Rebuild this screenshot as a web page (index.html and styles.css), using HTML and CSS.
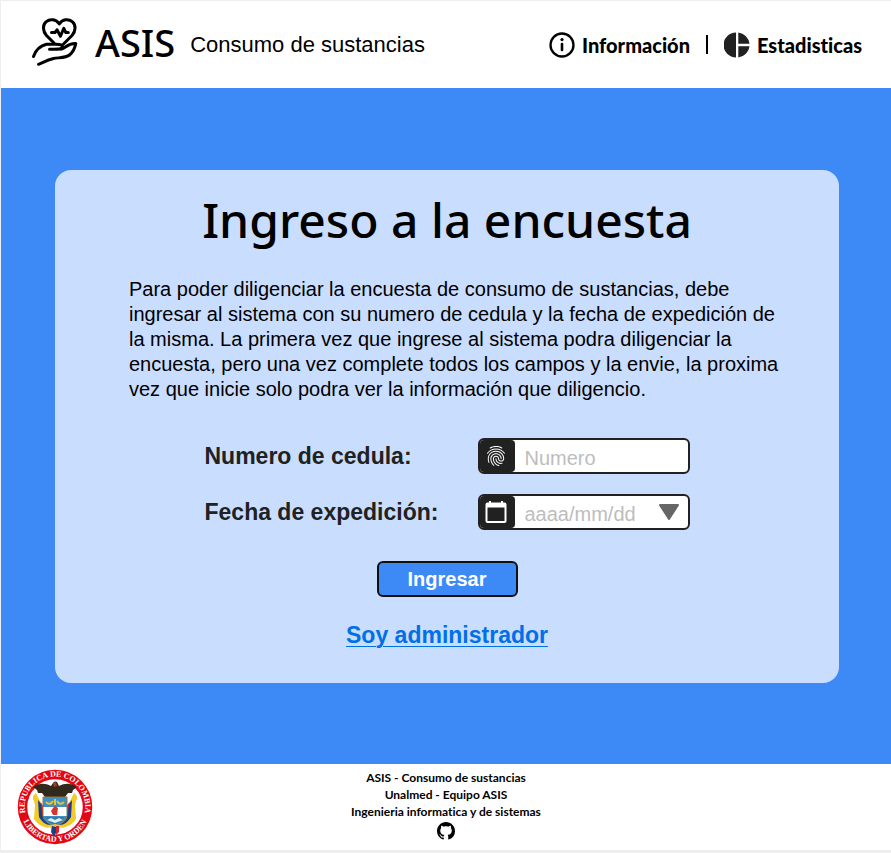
FILE: index.html
```html
<!DOCTYPE html>
<html lang="es">
<head>
<meta charset="utf-8">
<meta name="viewport" content="width=device-width, initial-scale=1">
<title>ASIS - Consumo de sustancias</title>
<link rel="stylesheet" href="styles.css">
</head>
<body>
<header class="topbar">
  <a class="brand" href="#">
    <svg class="brand-logo" viewBox="1 0 48 52" aria-hidden="true">
      <g fill="none" stroke="#000" stroke-width="3" stroke-linecap="round" stroke-linejoin="round">
        <path d="M24 27 16.500 19.500C12.500 15 12.500 9 16 5.800C20 2.500 26 3 29.300 8C32.500 3 38.500 2.500 42.500 5.800C46 9 46 15 42 19.500L33.500 28"/>
        <path d="M21.500 16.500h3.500l2-2.700 3.500 6.500 3.300-8 2 4.200h2.500"/>
        <path d="M3.500 40.500C5.500 35 9 30 16.500 28.300H25C30 28.500 33.500 28.500 32 31.500C31 33.500 29 33.200 19.500 33.200M31 33.200C36 32.500 37 27 45.800 27.500C45 32 43 36 39.500 39C36 42 29 41.500 23.500 42.500C17 44 13 46.500 8.500 48.300"/>
      </g>
    </svg>
    <span class="brand-name">ASIS</span>
    <span class="brand-tag">Consumo de sustancias</span>
  </a>
  <nav class="nav">
    <a class="nav-link" href="#">
      <svg class="nav-icon" viewBox="0 0 26 26" aria-hidden="true">
        <circle cx="13" cy="13" r="11.500" fill="none" stroke="#000" stroke-width="2.300"/>
        <path d="M13 12v6" stroke="#000" stroke-width="2.600" stroke-linecap="round"/>
        <circle cx="13" cy="7.600" r="1.600"/>
      </svg>
      Información
    </a>
    <span class="nav-sep"></span>
    <a class="nav-link" href="#">
      <svg class="nav-icon" viewBox="0 0 26 26" aria-hidden="true">
        <path fill="#212121" d="M12 .5V25.500A12.500 12.500 0 0 1 12 .5ZM14.300 .5A12.600 12.600 0 0 1 25.500 11.800H14.300ZM14.300 14.200H25.500A12.600 12.600 0 0 1 14.300 25.500Z"/>
      </svg>
      Estadisticas
    </a>
  </nav>
</header>

<main class="main">
  <form class="card">
    <h1 class="title">Ingreso a la encuesta</h1>
    <p class="intro">Para poder diligenciar la encuesta de consumo de sustancias, debe ingresar al sistema con su numero de cedula y la fecha de expedición de la misma. La primera vez que ingrese al sistema podra diligenciar la encuesta, pero una vez complete todos los campos y la envie, la proxima vez que inicie solo podra ver la información que diligencio.</p>
    <div class="fields">
      <label class="label" for="cedula">Numero de cedula:</label>
      <div class="field">
        <span class="field-icon">
          <svg class="field-glyph" viewBox="0 0 24 24" aria-hidden="true"><path fill="#fff" d="M17.810 4.470c-.08 0-.16-.02-.23-.06C15.660 3.420 14 3 12.010 3c-1.980 0-3.860.470-5.570 1.410-.24.130-.54.040-.68-.2-.13-.24-.04-.55.2-.68C7.820 2.520 9.860 2 12.010 2c2.130 0 3.990.470 6.030 1.520.25.130.34.430.21.670-.09.180-.26.280-.44.280zM3.500 9.720c-.1 0-.2-.03-.29-.09-.23-.16-.28-.47-.12-.7.990-1.400 2.250-2.500 3.750-3.270C9.980 4.040 14 4.030 17.150 5.650c1.500.770 2.760 1.860 3.750 3.250.16.220.11.540-.12.700-.23.160-.54.110-.7-.12-.9-1.260-2.040-2.250-3.390-2.940-2.870-1.470-6.540-1.470-9.400.010-1.360.700-2.500 1.700-3.400 2.960-.08.140-.23.210-.39.210zm6.250 12.070c-.13 0-.26-.05-.35-.15-.87-.87-1.340-1.430-2.010-2.640-.69-1.230-1.050-2.730-1.050-4.340 0-2.970 2.540-5.390 5.660-5.390s5.660 2.420 5.660 5.390c0 .28-.22.500-.5.500s-.5-.22-.5-.5c0-2.420-2.090-4.390-4.660-4.390-2.570 0-4.660 1.970-4.660 4.390 0 1.440.320 2.770.930 3.850.640 1.150 1.080 1.640 1.850 2.420.190.200.190.510 0 .710-.11.100-.24.150-.37.150zm7.170-1.850c-1.190 0-2.240-.3-3.100-.89-1.490-1.010-2.380-2.650-2.380-4.390 0-.28.220-.5.500-.5s.5.220.5.500c0 1.410.720 2.740 1.940 3.560.710.480 1.540.710 2.540.710.240 0 .640-.03 1.040-.1.270-.05.530.130.580.410.050.270-.13.530-.41.580-.57.110-1.070.120-1.210.120zM14.910 22c-.04 0-.09-.01-.13-.02-1.590-.44-2.630-1.030-3.720-2.100-1.400-1.390-2.170-3.240-2.170-5.220 0-1.620 1.380-2.940 3.080-2.940 1.700 0 3.080 1.320 3.080 2.940 0 1.070.930 1.940 2.080 1.940s2.080-.87 2.080-1.940c0-3.770-3.250-6.830-7.250-6.830-2.840 0-5.440 1.580-6.610 4.030-.39.810-.59 1.760-.59 2.800 0 .78.070 2.010.670 3.610.1.260-.03.550-.29.640-.26.100-.55-.04-.64-.29-.49-1.310-.73-2.610-.73-3.960 0-1.200.230-2.290.680-3.240 1.330-2.790 4.280-4.600 7.510-4.600 4.550 0 8.250 3.510 8.250 7.830 0 1.620-1.380 2.940-3.080 2.940s-3.080-1.320-3.080-2.940c0-1.070-.93-1.940-2.080-1.940s-2.080.870-2.080 1.940c0 1.710.660 3.310 1.870 4.510.950.940 1.860 1.460 3.270 1.850.270.070.420.350.350.610-.05.230-.26.380-.47.380z"/></svg>
        </span>
        <input class="input" id="cedula" type="text" inputmode="numeric" placeholder="Numero">
      </div>
      <label class="label" for="fecha">Fecha de expedición:</label>
      <div class="field">
        <span class="field-icon">
          <svg class="field-glyph" viewBox="0 0 24 24" aria-hidden="true"><path fill="#fff" fill-rule="evenodd" d="M3.500 2.500H5V1h2v1.500h10V1h2v1.500h1.500a2 2 0 0 1 2 2v16.500a2 2 0 0 1-2 2h-17a2 2 0 0 1-2-2V4.500a2 2 0 0 1 2-2zM3.500 7.500v13.500h17V7.500z"/></svg>
        </span>
        <input class="input" id="fecha" type="text" placeholder="aaaa/mm/dd">
        <button class="picker" type="button" aria-label="Abrir calendario">
          <svg class="picker-glyph" viewBox="0 0 20 16" aria-hidden="true"><path d="M1 1h18L10 15z" fill="#666" stroke="#666" stroke-width="2" stroke-linejoin="round"/></svg>
        </button>
      </div>
    </div>
    <button class="submit" type="submit">Ingresar</button>
    <a class="admin" href="#">Soy administrador</a>
  </form>
</main>

<footer class="footer">
  <svg class="seal" viewBox="0 0 76 76" role="img" aria-label="Escudo de Colombia">
    <circle cx="38" cy="38" r="32.500" fill="#fff" stroke="#e30613" stroke-width="9.500"/>
    <path id="arc-top" d="M11.500 52.500A30.300 30.300 0 1 1 64.500 52.500" fill="none"/>
    <path id="arc-bottom" d="M6 51.500A34.800 34.800 0 0 0 70 51.500" fill="none"/>
    <text class="seal-text"><textPath href="#arc-top" startOffset="50%" text-anchor="middle">REPUBLICA DE COLOMBIA</textPath></text>
    <text class="seal-text"><textPath href="#arc-bottom" startOffset="50%" text-anchor="middle">LIBERTAD Y ORDEN</textPath></text>
    <path d="M19 24c-3 2-4 5-2 8l1 4-1 14c4 6 9 8 14 9l4-3-11-22zM57 24c3 2 4 5 2 8l-1 4 1 14c-4 6-9 8-14 9l-4-3 11-22z" fill="#f4c92a"/>
    <path d="M21 31l1 17c3 5 7 8 11 8l2-2-10-18zM55 31l-1 17c-3 5-7 8-11 8l-2-2 10-18z" fill="#173f8a"/>
    <path d="M23.500 33l2 14 7 7 2-2-9-16zM52.500 33l-2 14-7 7-2-2 9-16z" fill="#d8202a"/>
    <path d="M16 18c6-4 12-4 18-1l2-3c2-2 4-2 5 1l1 2c6-3 12-3 18 1l-4 3-1 3-4 0-3 4-6 1H34l-6-1-3-4-4 0-1-3z" fill="#30291c"/>
    <path d="M36 14l3-1 1 4-3 1z" fill="#a33b22"/>
    <path d="M26 28h24v18c0 6-5 8-12 12-7-4-12-6-12-12z" fill="#3f8fc6" stroke="#9a772b"/>
    <path d="M29 33c3 3 5 2 7-1M47 33c-3 3-5 2-7-1M38 30v6" fill="none" stroke="#e8c72c" stroke-width="2"/>
    <path d="M26.500 38h23v9h-23z" fill="#fff"/>
    <path d="M36 39l2-2 3 2-1 7h-4l-2-4z" fill="#d8342d"/>
    <path d="M28 48h20l-4 5-6 3-6-3z" fill="#347ba5"/>
    <path d="M30 51l4-2 4 2 4-2 4 2-8 3z" fill="#d9eef5"/>
    <path d="M31 57l7-2 7 2-4 3-3 5-3-5z" fill="#f4c92a"/>
    <path d="M35 57l4 1 0 6-2 4-3-5z" fill="#173f8a"/>
    <path d="M39 57h3v6l-3 3z" fill="#d8202a"/>
  </svg>
  <div class="credits">
    <span>ASIS - Consumo de sustancias</span>
    <span>Unalmed - Equipo ASIS</span>
    <span>Ingenieria informatica y de sistemas</span>
    <a class="github" href="#" aria-label="GitHub">
      <svg class="github-icon" viewBox="0 0 16 16" aria-hidden="true"><path d="M8 0C3.580 0 0 3.580 0 8c0 3.540 2.290 6.530 5.470 7.590.4.070.550-.17.550-.38 0-.19-.01-.82-.01-1.490-2.010.370-2.530-.49-2.690-.94-.09-.23-.48-.94-.82-1.130-.28-.15-.68-.52-.01-.53.630-.01 1.080.580 1.230.820.720 1.210 1.870.870 2.330.660.070-.52.280-.87.510-1.070-1.780-.2-3.640-.89-3.640-3.950 0-.87.310-1.590.820-2.150-.08-.2-.36-1.020.080-2.120 0 0 .670-.21 2.200.820.640-.18 1.320-.27 2-.27s1.360.090 2 .270c1.530-1.040 2.200-.82 2.200-.82.440 1.100.160 1.920.080 2.120.510.560.820 1.270.820 2.150 0 3.070-1.870 3.750-3.650 3.950.290.250.540.730.540 1.480 0 1.070-.01 1.930-.01 2.200 0 .21.150.460.550.380A8.010 8.010 0 0 0 16 8c0-4.420-3.580-8-8-8z"/></svg>
    </a>
  </div>
</footer>
</body>
</html>
```
FILE: styles.css
```css
* {
  box-sizing: border-box;
}

body {
  margin: 0;
  min-height: 100vh;
  display: flex;
  flex-direction: column;
  border: solid #eee;
  border-width: 1px 0 3px 1px;
  background: #fff;
  color: #000;
  font-family: "Liberation Sans", Arial, sans-serif;
  font-variant-ligatures: none;
}

a {
  color: inherit;
  text-decoration: none;
}

svg {
  display: block;
  flex: none;
}

.topbar {
  display: flex;
  align-items: center;
  justify-content: space-between;
  height: 87px;
  padding: 0 29px 0 30px;
}

.brand {
  display: flex;
  align-items: center;
}

.brand-logo {
  width: 48px;
  height: 52px;
  margin: 0 16px 6px 0;
}

.brand-name {
  margin: 0 15px 6px 0;
  font-family: "Noto Sans", sans-serif;
  font-size: 38px;
  font-weight: 500;
  line-height: 44px;
}

.brand-tag {
  font-size: 22px;
  line-height: 28px;
}

.nav {
  display: flex;
  align-items: center;
  gap: 16px;
}

.nav-link {
  display: flex;
  align-items: center;
  gap: 7px;
  font-family: Lato, sans-serif;
  font-size: 20px;
  font-weight: 900;
  line-height: 26px;
}

.nav-icon {
  width: 26px;
  height: 26px;
}

.nav-sep {
  width: 2px;
  height: 19px;
  background: #000;
}

.main {
  flex: 1;
  display: flex;
  align-items: center;
  padding: 80px 52px 80px 54px;
  background: #3d8af7;
}

.card {
  flex: 1;
  display: flex;
  flex-direction: column;
  align-items: center;
  padding: 18px 50px 34px;
  border-radius: 16px;
  background: #c9ddff;
}

.title {
  margin: 0;
  font-family: "Noto Sans", sans-serif;
  font-size: 48px;
  font-weight: 500;
  line-height: 64px;
}

.intro {
  max-width: 656px;
  margin: 25px 0 36px 20px;
  font-size: 20px;
  line-height: 25px;
}

.fields {
  display: grid;
  grid-template-columns: 273px 212px;
  align-items: center;
  row-gap: 20px;
}

.label {
  color: #212121;
  font-size: 23px;
  font-weight: 700;
  line-height: 28px;
}

.field {
  display: flex;
  height: 36px;
  overflow: hidden;
  border: 2px solid #212121;
  border-radius: 6px;
  background: #fff;
}

.field-icon {
  display: flex;
  flex: none;
  align-items: center;
  justify-content: center;
  width: 35px;
  padding-right: 2px;
  border-radius: 0 4px 4px 0;
  background: #212121;
}

.field-glyph {
  width: 24px;
  height: 24px;
}

.input {
  flex: 1;
  min-width: 0;
  padding: 4px 0 0 10px;
  border: 0;
  outline: 0;
  background: transparent;
  font: 20px/24px "Liberation Sans", Arial, sans-serif;
}

.input::placeholder {
  color: #bdbdbd;
  opacity: 1;
}

.picker {
  padding: 0 9px;
  border: 0;
  background: transparent;
}

.picker-glyph {
  width: 20px;
  height: 16px;
}

.submit {
  width: 141px;
  height: 36px;
  margin: 31px 0 24px;
  padding: 0;
  border: 2px solid #111;
  border-radius: 6px;
  background: #3d8af7;
  color: #fff;
  font: 700 20px/24px "Liberation Sans", Arial, sans-serif;
}

.admin {
  color: #0070e8;
  font-size: 23px;
  font-weight: 700;
  line-height: 28px;
  text-decoration: underline;
  text-decoration-thickness: 1px;
  text-underline-offset: 3px;
}

.footer {
  display: grid;
  grid-template-columns: 1fr auto 1fr;
  align-items: start;
  padding: 5px 16px;
}

.seal {
  width: 76px;
  height: 76px;
}

.seal-text {
  fill: #fff;
  font: 700 8px "Liberation Serif", serif;
}

.credits {
  display: flex;
  flex-direction: column;
  align-items: center;
  font-family: Lato, sans-serif;
  font-size: 12px;
  font-weight: 700;
  line-height: 17px;
}

.github-icon {
  width: 18px;
  height: 18px;
  margin-top: 2px;
}
```
